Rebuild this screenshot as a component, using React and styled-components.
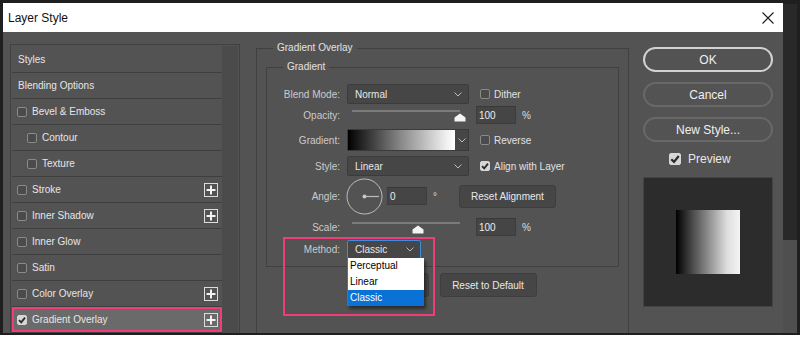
import React from 'react';
import styled, { createGlobalStyle } from 'styled-components';

const GlobalStyle = createGlobalStyle`
  html, body {
    margin: 0;
    padding: 0;
    background: #ffffff;
  }
  body {
    font-family: "Liberation Sans", Arial, sans-serif;
  }
  * {
    box-sizing: border-box;
  }
`;

const Screen = styled.div`
  display: flex;
  height: 335px;
  padding: 3px 0 0 3px;
  background: #1f1f1f;
  overflow: hidden;
`;

const Dialog = styled.div`
  display: flex;
  flex-direction: column;
  width: 780px;
  height: 330px;
  flex-shrink: 0;
`;

const TitleBar = styled.div`
  display: flex;
  align-items: center;
  justify-content: space-between;
  height: 29px;
  padding: 0 9px 0 5px;
  background: #ffffff;
  color: #111111;
  font-size: 12px;
`;

const SideStrip = styled.div`
  display: flex;
  flex-direction: column;
  width: 14px;
  margin-top: 1px;
`;

const StripPart = styled.div`
  height: ${p => p.$h}px;
  background: ${p => p.$color};
`;

const Body = styled.div`
  display: flex;
  align-items: flex-start;
  height: 301px;
  background: #535353;
  overflow: hidden;
  font-size: 10px;
  color: #e4e4e4;
`;

/* left list of effects */
const StylesPanel = styled.div`
  display: flex;
  width: 230px;
  height: 300px;
  margin: 12px 0 0 7px;
  padding: 1px;
  border: 1px solid #414141;
  flex-shrink: 0;
`;

const StyleList = styled.ul`
  width: 210px;
  margin: 1px 0 0;
  padding: 0;
  list-style: none;
`;

const Gutter = styled.div`
  flex: 1;
  background: #4b4b4b;
`;

const StyleRow = styled.li`
  display: flex;
  align-items: center;
  gap: 5px;
  height: 26px;
  padding: 0 4px 0 ${p => (p.$indent ? 15 : p.$plain ? 6 : 5)}px;
  border-bottom: 1px solid #3f3f3f;
  color: #e6e6e6;
  background: ${p => (p.$selected ? '#6a6a6a' : 'transparent')};
  box-shadow: ${p => (p.$selected ? 'inset 0 0 0 2px #ee3d78' : 'none')};
`;

const Box = styled.span`
  display: inline-flex;
  align-items: center;
  justify-content: center;
  width: ${p => p.$size || 10}px;
  height: ${p => p.$size || 10}px;
  border-radius: 2px;
  flex-shrink: 0;
  border: 1px solid ${p => (p.$checked ? '#d6d6d6' : '#8a8a8a')};
  background: ${p => (p.$checked ? '#d6d6d6' : '#4b4b4b')};
`;

const PlusBox = styled.span`
  display: inline-flex;
  margin-left: auto;
  width: 14px;
  height: 14px;
  border: 1px solid #dcdcdc;
  align-items: center;
  justify-content: center;
`;

/* centre settings */
const Content = styled.div`
  width: 373px;
  margin: 10px 0 0 16px;
  flex-shrink: 0;
`;

const Group = styled.fieldset`
  margin: ${p => (p.$inner ? '7px 0 0' : '0')};
  padding: ${p => (p.$inner ? '0' : '0 9px')};
  min-width: 0;
  border: 1px solid #404040;
  height: ${p => (p.$inner ? 'auto' : '320px')};
`;

const Legend = styled.legend`
  margin-left: ${p => p.$ml}px;
  padding: 0 4px;
  font-size: 10px;
  line-height: 12px;
  color: #e2e2e2;
`;

const Rows = styled.div`
  padding: 11px 0 7px;
`;

const Row = styled.div`
  position: relative;
  display: flex;
  align-items: center;
  height: ${p => p.$h}px;
  margin-top: ${p => p.$mt || 0}px;
`;

const Label = styled.span`
  width: 73px;
  margin-right: 7px;
  text-align: right;
  color: #cbcbcb;
  flex-shrink: 0;
`;

const Select = styled.div`
  position: relative;
  display: flex;
  align-items: center;
  justify-content: space-between;
  width: ${p => p.$w || 122}px;
  height: 100%;
  padding: 0 6px 0 7px;
  background: #464646;
  border: 1px solid ${p => (p.$focus ? '#3a8de2' : '#3b3b3b')};
  border-radius: 2px;
  color: #e8e8e8;
`;

const SideCheck = styled.label`
  display: flex;
  align-items: center;
  gap: 4px;
  margin-left: 11px;
  color: #e2e2e2;
`;

const Slider = styled.div`
  position: relative;
  width: 122px;
  height: 18px;
  flex-shrink: 0;
`;

const Track = styled.div`
  position: absolute;
  left: 5px;
  top: 4px;
  width: 108px;
  height: 2px;
  background: #7b7b7b;
`;

const Thumb = styled.svg`
  position: absolute;
  top: 7px;
  left: ${p => p.$at}px;
`;

const NumberBox = styled.div`
  display: flex;
  align-items: center;
  width: 40px;
  height: 18px;
  margin-left: ${p => p.$ml}px;
  padding-left: 2px;
  background: #454545;
  border: 1px solid #3d3d3d;
  border-top-color: #383838;
  color: #ececec;
`;

const Unit = styled.span`
  width: ${p => p.$w || 'auto'};
  padding-left: 6px;
  color: #dedede;
`;

const GradientPicker = styled.div`
  display: flex;
  width: 122px;
  height: 100%;
  border: 1px solid #3b3b3b;
  background: #464646;
`;

const GradientBar = styled.div`
  width: 107px;
  background: linear-gradient(90deg, #000000 0%, #2a2a2a 15%, #8a8a8a 50%, #f0f0f0 92%, #ffffff 100%);
`;

const ArrowCell = styled.div`
  flex: 1;
  display: flex;
  align-items: center;
  justify-content: center;
`;

const Dial = styled.svg`
  margin-left: -1px;
  flex-shrink: 0;
`;

const FlatButton = styled.button`
  width: ${p => p.$w}px;
  height: ${p => p.$h || 24}px;
  padding: 0;
  background: #464646;
  border: 1px solid #3e3e3e;
  border-radius: 3px;
  color: #e8e8e8;
  font-family: "Liberation Sans", Arial, sans-serif;
  font-size: 10px;
`;

const Menu = styled.ul`
  position: absolute;
  top: 100%;
  left: -1px;
  width: 77px;
  margin: 0;
  padding: 0;
  list-style: none;
  background: #ffffff;
  border-left: 1px solid #2b7bd0;
  box-shadow: 2px 3px 3px rgba(0, 0, 0, 0.45);
  z-index: 2;
`;

const MenuItem = styled.li`
  height: 16px;
  line-height: 16px;
  padding-left: 2px;
  font-size: 10px;
  color: ${p => (p.$active ? '#ffffff' : '#000000')};
  background: ${p => (p.$active ? '#0a72d4' : 'transparent')};
`;

const Highlight = styled.div`
  position: absolute;
  left: 16px;
  top: -3px;
  width: 152px;
  height: 79px;
  border: 2px solid #ee3d78;
  pointer-events: none;
`;

const ButtonRow = styled.div`
  display: flex;
  justify-content: center;
  gap: 11px;
  margin-top: 6px;
`;

/* right column */
const Side = styled.div`
  display: flex;
  flex-direction: column;
  width: 130px;
  margin: 15px 0 0 14px;
  flex-shrink: 0;
`;

const PillButton = styled.button`
  height: 25px;
  margin-bottom: 10px;
  padding: 0;
  border-radius: 13px;
  border: 2px solid ${p => (p.$primary ? '#d2d2d2' : '#686868')};
  background: transparent;
  color: #efefef;
  font-family: "Liberation Sans", Arial, sans-serif;
  font-size: 12px;
`;

const PreviewToggle = styled.label`
  display: flex;
  align-items: center;
  gap: 7px;
  height: 14px;
  padding-left: 26px;
  font-size: 12px;
  color: #e8e8e8;
`;

const PreviewBox = styled.div`
  display: flex;
  align-items: center;
  justify-content: center;
  width: 130px;
  height: 130px;
  margin-top: 11px;
  background: #2c2c2c;
  border: 1px solid #444444;
`;

const PreviewSwatch = styled.div`
  width: 64px;
  height: 64px;
  background: linear-gradient(90deg, #000000 0%, #3a3a3a 20%, #8c8c8c 50%, #dedede 80%, #f4f4f4 100%);
`;

const BottomStrip = styled.div`
  height: 3px;
  background: #ffffff;
`;

const Chevron = () => (
  <svg width="8" height="5" viewBox="0 0 8 5">
    <polyline points="0.5,0.5 4,4 7.5,0.5" fill="none" stroke="#bdbdbd" strokeWidth="1" />
  </svg>
);

const Check = ({ size = 10 }) => (
  <svg width={size - 2} height={size - 2} viewBox="0 0 8 8">
    <polyline points="1,4.2 3.2,6.3 7,1.6" fill="none" stroke="#2a2a2a" strokeWidth="1.8" />
  </svg>
);

const CheckBox = ({ checked, size }) => (
  <Box $checked={checked} $size={size}>
    {checked && <Check size={size || 10} />}
  </Box>
);

const Plus = () => (
  <PlusBox>
    <svg width="10" height="10" viewBox="0 0 10 10">
      <rect x="4" y="0.5" width="2" height="9" fill="#f2f2f2" />
      <rect x="0.5" y="4" width="9" height="2" fill="#f2f2f2" />
    </svg>
  </PlusBox>
);

const SliderThumb = ({ at }) => (
  <Thumb $at={at} width="12" height="9" viewBox="0 0 12 9">
    <path d="M6 0.5 L11.5 4.5 L11.5 8.5 L0.5 8.5 L0.5 4.5 Z" fill="#f4f4f4" />
  </Thumb>
);

const effects = [
  { name: 'Styles', plain: true },
  { name: 'Blending Options', plain: true },
  { name: 'Bevel & Emboss' },
  { name: 'Contour', indent: true },
  { name: 'Texture', indent: true },
  { name: 'Stroke', plus: true },
  { name: 'Inner Shadow', plus: true },
  { name: 'Inner Glow' },
  { name: 'Satin' },
  { name: 'Color Overlay', plus: true },
  { name: 'Gradient Overlay', plus: true, checked: true, selected: true },
];

export default function App() {
  return (
    <>
      <GlobalStyle />
      <Screen>
        <Dialog>
          <TitleBar>
            <span>Layer Style</span>
            <svg width="12" height="12" viewBox="0 0 12 12">
              <path d="M0.5 0.5 L11.5 11.5 M11.5 0.5 L0.5 11.5" stroke="#1a1a1a" strokeWidth="1.1" />
            </svg>
          </TitleBar>
          <Body>
            <StylesPanel>
              <StyleList>
                {effects.map(e => (
                  <StyleRow key={e.name} $indent={e.indent} $plain={e.plain} $selected={e.selected}>
                    {!e.plain && <CheckBox checked={e.checked} />}
                    <span>{e.name}</span>
                    {e.plus && <Plus />}
                  </StyleRow>
                ))}
              </StyleList>
              <Gutter />
            </StylesPanel>

            <Content>
              <Group>
                <Legend $ml={7}>Gradient Overlay</Legend>
                <Group $inner>
                  <Legend $ml={16}>Gradient</Legend>
                  <Rows>
                    <Row $h={20}>
                      <Label>Blend Mode:</Label>
                      <Select>
                        <span>Normal</span>
                        <Chevron />
                      </Select>
                      <SideCheck>
                        <CheckBox />
                        Dither
                      </SideCheck>
                    </Row>
                    <Row $h={18} $mt={2}>
                      <Label>Opacity:</Label>
                      <Slider>
                        <Track />
                        <SliderThumb at={107} />
                      </Slider>
                      <NumberBox $ml={7}>100</NumberBox>
                      <Unit>%</Unit>
                    </Row>
                    <Row $h={22} $mt={5}>
                      <Label>Gradient:</Label>
                      <GradientPicker>
                        <GradientBar />
                        <ArrowCell>
                          <Chevron />
                        </ArrowCell>
                      </GradientPicker>
                      <SideCheck>
                        <CheckBox />
                        Reverse
                      </SideCheck>
                    </Row>
                    <Row $h={20} $mt={5}>
                      <Label>Style:</Label>
                      <Select>
                        <span>Linear</span>
                        <Chevron />
                      </Select>
                      <SideCheck>
                        <CheckBox checked />
                        Align with Layer
                      </SideCheck>
                    </Row>
                    <Row $h={36} $mt={2}>
                      <Label>Angle:</Label>
                      <Dial width="37" height="37" viewBox="0 0 37 37">
                        <circle cx="18.5" cy="18.5" r="17.5" fill="none" stroke="#bcbcbc" strokeWidth="1" />
                        <line x1="18.5" y1="18.5" x2="33" y2="18.5" stroke="#bcbcbc" strokeWidth="1.2" />
                        <circle cx="18.5" cy="18.5" r="2" fill="#c8c8c8" />
                      </Dial>
                      <NumberBox $ml={4}>0</NumberBox>
                      <Unit $w="32px">°</Unit>
                      <FlatButton $w={97} $h={23}>Reset Alignment</FlatButton>
                    </Row>
                    <Row $h={18} $mt={4}>
                      <Label>Scale:</Label>
                      <Slider>
                        <Track />
                        <SliderThumb at={65} />
                      </Slider>
                      <NumberBox $ml={7}>100</NumberBox>
                      <Unit>%</Unit>
                    </Row>
                    <Row $h={19} $mt={4}>
                      <Highlight />
                      <Label>Method:</Label>
                      <Select $w={74} $focus>
                        <span>Classic</span>
                        <Chevron />
                        <Menu>
                          <MenuItem>Perceptual</MenuItem>
                          <MenuItem>Linear</MenuItem>
                          <MenuItem $active>Classic</MenuItem>
                        </Menu>
                      </Select>
                    </Row>
                  </Rows>
                </Group>
                <ButtonRow>
                  <FlatButton $w={80}>Make Default</FlatButton>
                  <FlatButton $w={97}>Reset to Default</FlatButton>
                </ButtonRow>
              </Group>
            </Content>

            <Side>
              <PillButton $primary>OK</PillButton>
              <PillButton>Cancel</PillButton>
              <PillButton>New Style...</PillButton>
              <PreviewToggle>
                <CheckBox checked size={12} />
                Preview
              </PreviewToggle>
              <PreviewBox>
                <PreviewSwatch />
              </PreviewBox>
            </Side>
          </Body>
        </Dialog>
        <SideStrip>
          <StripPart $h={236} $color="#292929" />
          <StripPart $h={93} $color="#4f4f4f" />
        </SideStrip>
      </Screen>
      <BottomStrip />
    </>
  );
}
